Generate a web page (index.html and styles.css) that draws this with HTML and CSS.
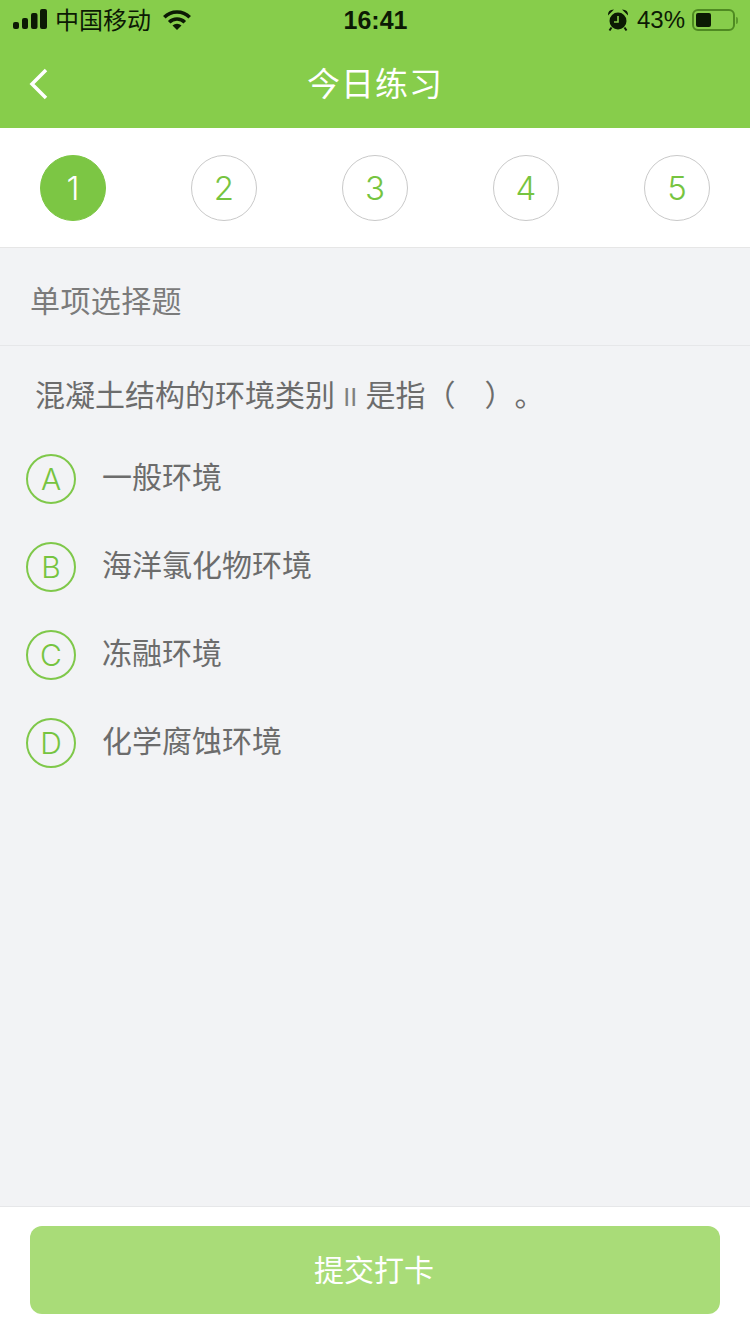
FILE: index.html
```html
<!DOCTYPE html>
<html lang="zh-CN">
  <head>
    <meta charset="UTF-8" />
    <meta name="viewport" content="width=device-width, initial-scale=1.0" />
    <title>今日练习</title>
    <link rel="stylesheet" href="styles.css">
  </head>
  <body>
    <div id="main">
      <div class="header">
        <div class="status-bar">
          <div class="status-left">
            <svg class="signal" width="34" height="22" viewBox="0 0 34 22">
              <rect x="0" y="13" width="6" height="7" rx="2" />
              <rect x="9" y="9" width="6" height="11" rx="2" />
              <rect x="18" y="4" width="6.5" height="16" rx="2" />
              <rect x="27" y="0" width="7" height="20" rx="2" />
            </svg>
            <span class="carrier">中国移动</span>
            <svg class="wifi" width="30" height="24" viewBox="0 0 30 24">
              <path class="wifi-arc" d="M2.3 9.3 A18 18 0 0 1 27.7 9.3" />
              <path class="wifi-arc" d="M7.2 14.2 A11 11 0 0 1 22.8 14.2" />
              <path d="M15 22 L10.5 17.5 A6.4 6.4 0 0 1 19.5 17.5 Z" />
            </svg>
          </div>
          <div class="status-time">16:41</div>
          <div class="status-right">
            <svg class="alarm" width="22" height="24" viewBox="0 0 22 24">
              <circle cx="11" cy="13" r="8.5" />
              <path d="M1 7.5 Q0.5 1.5 7 1.5 Z M21 7.5 Q21.5 1.5 15 1.5 Z" />
              <path d="M4.5 19.5 L2.5 22.5 M17.5 19.5 L19.5 22.5" class="alarm-feet" />
              <path d="M11 8 V14 H7" class="alarm-hand" />
            </svg>
            <span class="battery-text">43%</span>
            <div class="battery">
              <div class="battery-level"></div>
            </div>
            <div class="battery-cap"></div>
          </div>
        </div>
        <div class="nav-bar">
          <svg class="back" width="20" height="32" viewBox="0 0 20 32">
            <path d="M17 2 L3 16 L17 30" />
          </svg>
          <div class="nav-title">今日练习</div>
        </div>
      </div>

      <div class="steps">
        <div class="step active">1</div>
        <div class="step">2</div>
        <div class="step">3</div>
        <div class="step">4</div>
        <div class="step">5</div>
      </div>

      <div class="content">
        <div class="question-type">单项选择题</div>
        <div class="question">混凝土结构的环境类别 <span class="roman">II</span> 是指（<span class="blank"></span>）。</div>
        <div class="options">
          <div class="option"><div class="option-mark">A</div><div class="option-text">一般环境</div></div>
          <div class="option"><div class="option-mark">B</div><div class="option-text">海洋氯化物环境</div></div>
          <div class="option"><div class="option-mark">C</div><div class="option-text">冻融环境</div></div>
          <div class="option"><div class="option-mark">D</div><div class="option-text">化学腐蚀环境</div></div>
        </div>
      </div>

      <div class="footer">
        <button class="submit" type="button">提交打卡</button>
      </div>
    </div>
  </body>
</html>
```

FILE: styles.css
```css
* {
  box-sizing: border-box;
}
html,
body {
  margin: 0;
  padding: 0;
}
body {
  font-family: "Liberation Sans", "Noto Sans CJK SC", sans-serif;
  background: #f2f3f5;
}
#main {
  width: 750px;
  height: 1334px;
  display: flex;
  flex-direction: column;
  overflow: hidden;
}

.header {
  height: 128px;
  background: #87cd4b;
  flex-shrink: 0;
}
.status-bar {
  height: 40px;
  padding: 0 12px 0 13px;
  display: flex;
  align-items: center;
  position: relative;
  color: #0c1a04;
}
.status-left {
  display: flex;
  align-items: center;
  flex: 1;
}
.signal {
  fill: #0c1a04;
}
.carrier {
  font-size: 24px;
  margin-left: 8px;
  padding-bottom: 4px;
}
.wifi {
  fill: #0c1a04;
  margin-left: 11px;
}
.wifi-arc {
  fill: none;
  stroke: #0c1a04;
  stroke-width: 3.6;
}
.status-time {
  font-size: 25px;
  font-weight: bold;
  width: 100px;
  text-align: center;
}
.status-right {
  flex: 1;
  display: flex;
  align-items: center;
  justify-content: flex-end;
}
.alarm {
  fill: #0c1a04;
}
.alarm-feet {
  fill: none;
  stroke: #0c1a04;
  stroke-width: 2;
}
.alarm-hand {
  fill: none;
  stroke: #87cd4b;
  stroke-width: 1.6;
}
.battery-text {
  font-size: 24px;
  margin-left: 8px;
}
.battery {
  width: 43px;
  height: 22px;
  margin-left: 7px;
  padding: 2px;
  border: 2px solid #4f8a22;
  border-radius: 6px;
}
.battery-level {
  width: 15px;
  height: 100%;
  background: #0c1a04;
  border-radius: 2px;
}
.battery-cap {
  width: 2px;
  height: 7px;
  margin-left: 1px;
  background: #5c9a2c;
  border-radius: 0 2px 2px 0;
}

.nav-bar {
  height: 88px;
  display: flex;
  align-items: center;
  justify-content: center;
  position: relative;
  padding-bottom: 5px;
}
.back {
  position: absolute;
  left: 29px;
  top: 28px;
  fill: none;
  stroke: #fff;
  stroke-width: 3.5;
}
.nav-title {
  color: #fff;
  font-size: 33px;
  letter-spacing: 1px;
}

.steps {
  height: 120px;
  background: #fff;
  border-bottom: 1px solid #e6e6e6;
  padding: 0 40px 0;
  display: flex;
  align-items: center;
  justify-content: space-between;
  flex-shrink: 0;
}
.step {
  width: 66px;
  height: 66px;
  border-radius: 50%;
  border: 1px solid #c9c9c9;
  color: #76c440;
  font-family: Inter, "Liberation Sans", sans-serif;
  font-size: 33px;
  font-weight: 300;
  display: flex;
  align-items: center;
  justify-content: center;
}
.step.active {
  background: #7cc644;
  border-color: #7cc644;
  color: #fff;
}

.content {
  flex: 1;
}
.question-type {
  height: 98px;
  padding-top: 4px;
  padding-left: 30px;
  border-bottom: 1px solid #e6e7e9;
  color: #7b7b7b;
  font-size: 30px;
  letter-spacing: 0.4px;
  display: flex;
  align-items: center;
}
.question {
  color: #6c6c6c;
  font-size: 30px;
  padding-left: 35px;
  margin-top: 30px;
  line-height: 40px;
  text-spacing-trim: space-all;
}
.roman {
  font-size: 25px;
  line-height: 1;
  color: #808080;
}
.blank {
  display: inline-block;
  width: 29px;
}
.options {
  margin-top: 19px;
  display: flex;
  flex-direction: column;
}
.option {
  height: 88px;
  padding-left: 26px;
  display: flex;
  align-items: center;
}
.option-mark {
  width: 50px;
  height: 50px;
  border-radius: 50%;
  border: 2px solid #7fc84a;
  color: #76c440;
  font-family: Inter, "Liberation Sans", sans-serif;
  font-size: 30px;
  font-weight: 300;
  display: flex;
  align-items: center;
  justify-content: center;
}
.option-text {
  margin-left: 26px;
  padding-bottom: 8px;
  color: #6c6c6c;
  font-size: 30px;
}

.footer {
  height: 128px;
  background: #fff;
  border-top: 1px solid #e6e7e9;
  padding: 19px 30px 0;
  flex-shrink: 0;
}
.submit {
  display: block;
  width: 100%;
  height: 88px;
  border: 0;
  border-radius: 12px;
  padding: 0 2px 4px 0;
  background: #a9dc78;
  color: #fff;
  font-family: inherit;
  font-size: 30px;
}
```
